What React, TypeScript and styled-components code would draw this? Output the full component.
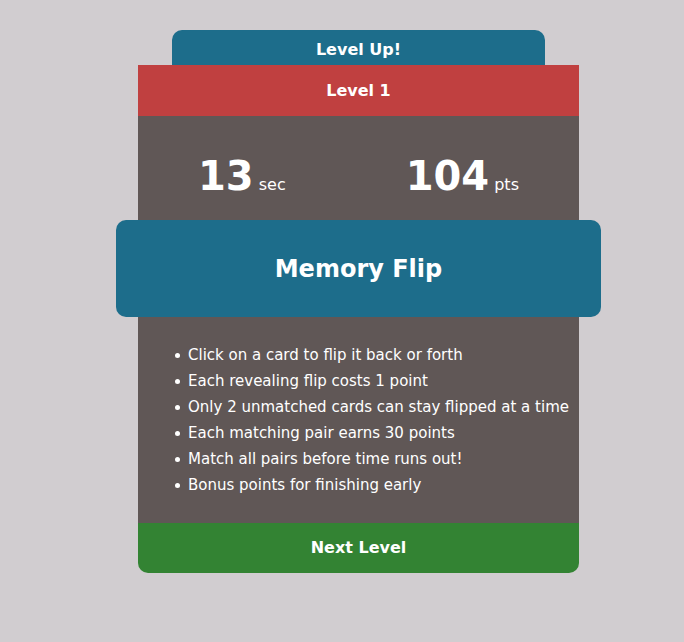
import React from "react";
import styled, { createGlobalStyle } from "styled-components";

const GlobalStyle = createGlobalStyle`
  *, *::before, *::after { box-sizing: border-box; }
  body {
    margin: 0;
    background: #d1cdd0;
    color: #fff;
    font-family: "DejaVu Sans", Verdana, sans-serif;
    font-size: 16px;
  }
`;

const Page = styled.main`
  display: flex;
  justify-content: center;
  padding: 30px 0 30px 33px;
`;

const Game = styled.section`
  display: flex;
  flex-direction: column;
  align-items: center;
  width: max-content;
`;

const Header = styled.header`
  width: 77%;
  padding: 10px 0 6px;
  border-radius: 10px 10px 0 0;
  background: #1d6d8b;
  font-weight: 700;
  line-height: 19px;
  text-align: center;
`;

const Panel = styled.div`
  width: 100%;
  padding: 0 22px;
`;

const LevelBar = styled.h2`
  margin: 0;
  padding: 16px 0;
  background: #c04040;
  font-size: 16px;
  line-height: 19px;
  text-align: center;
`;

const Scores = styled.div`
  display: flex;
  justify-content: space-between;
  padding: 36px 60px 11px;
  background: #605756;
  line-height: 48px;
`;

const Score = styled.div`
  white-space: nowrap;
`;

const Value = styled.span`
  font-size: 40px;
  font-weight: 700;
`;

const Title = styled.h1`
  width: 100%;
  margin: 0;
  padding: 35px 0 33px;
  border-radius: 10px;
  background: #1d6d8b;
  font-size: 24px;
  line-height: 29px;
  text-align: center;
`;

const Rules = styled.ul`
  margin: 0;
  padding: 25px 10px 25px 37px;
  background: #605756;
  font-size: 15px;
  line-height: 26px;
  list-style: none;
`;

const Rule = styled.li`
  display: flex;
  align-items: center;
  gap: 8px;

  &::before {
    content: "";
    flex: none;
    width: 5px;
    height: 5px;
    margin-top: 1px;
    border-radius: 50%;
    background: currentColor;
  }
`;

const NextButton = styled.button`
  display: block;
  width: 100%;
  padding: 15px 0 16px;
  border: 0;
  border-radius: 0 0 10px 10px;
  background: #338333;
  color: inherit;
  font: inherit;
  font-weight: 700;
  line-height: 19px;
  cursor: pointer;
`;

const rules = [
  "Click on a card to flip it back or forth",
  "Each revealing flip costs 1 point",
  "Only 2 unmatched cards can stay flipped at a time",
  "Each matching pair earns 30 points",
  "Match all pairs before time runs out!",
  "Bonus points for finishing early",
];

export default function App() {
  return (
    <>
      <GlobalStyle />
      <Page>
        <Game>
          <Header>Level Up!</Header>
          <Panel>
            <LevelBar>Level 1</LevelBar>
            <Scores>
              <Score><Value>13</Value> sec</Score>
              <Score><Value>104</Value> pts</Score>
            </Scores>
          </Panel>
          <Title>Memory Flip</Title>
          <Panel>
            <Rules>
              {rules.map((rule) => <Rule key={rule}>{rule}</Rule>)}
            </Rules>
            <NextButton type="button">Next Level</NextButton>
          </Panel>
        </Game>
      </Page>
    </>
  );
}
